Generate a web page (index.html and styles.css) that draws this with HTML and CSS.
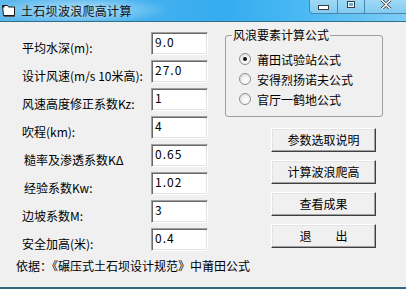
FILE: index.html
```html
<!DOCTYPE html>
<html lang="zh">
<head>
<meta charset="utf-8">
<title>土石坝波浪爬高计算</title>
<link rel="stylesheet" href="styles.css">
</head>
<body>
<div class="window">
  <div class="titlebar">
    <svg class="appicon" width="14" height="12" viewBox="0 0 14 12">
      <path d="M0.5 0.5 H5.5 L6.5 2 H12.5 V10.5 H1.5 Z" fill="#ffffff" stroke="#1a1a1a"/>
      <rect x="0.5" y="0.5" width="2" height="2" fill="#1a1a1a"/>
      <path d="M13 11.5 H2" stroke="#555" />
    </svg>
    <span class="title">土石坝波浪爬高计算</span>
    <div class="controls">
      <span class="ctl min"><i></i></span>
      <span class="ctl max"><i></i></span>
      <span class="ctl close">
        <svg width="12" height="9" viewBox="0 0 12 9"><path d="M1.5 0 L6 4 L10.5 0 M1.5 9 L6 5 L10.5 9" stroke="#3b3b3b" stroke-width="3" fill="none"/><path d="M1.5 0 L6 4 L10.5 0 M1.5 9 L6 5 L10.5 9" stroke="#ffffff" stroke-width="1.4" fill="none"/></svg>
      </span>
    </div>
  </div>
  <div class="client">
    <div class="main">
      <div class="fields">
        <div class="row"><span class="lbl">平均水深(m):</span><div class="box">9.0</div></div>
        <div class="row"><span class="lbl">设计风速(m/s 10米高):</span><div class="box">27.0</div></div>
        <div class="row"><span class="lbl">风速高度修正系数Kz:</span><div class="box">1</div></div>
        <div class="row"><span class="lbl">吹程(km):</span><div class="box">4</div></div>
        <div class="row"><span class="lbl ind">糙率及渗透系数KΔ</span><div class="box">0.65</div></div>
        <div class="row"><span class="lbl ind">经验系数Kw:</span><div class="box">1.02</div></div>
        <div class="row"><span class="lbl">边坡系数M:</span><div class="box">3</div></div>
        <div class="row"><span class="lbl">安全加高(米):</span><div class="box">0.4</div></div>
      </div>
      <div class="side">
        <div class="group">
          <span class="legend">风浪要素计算公式</span>
          <div class="radios">
            <div class="radio"><span class="dot on"></span><span>莆田试验站公式</span></div>
            <div class="radio"><span class="dot"></span><span>安得烈扬诺夫公式</span></div>
            <div class="radio"><span class="dot"></span><span>官厅一鹤地公式</span></div>
          </div>
        </div>
        <div class="buttons">
          <div class="btn">参数选取说明</div>
          <div class="btn">计算波浪爬高</div>
          <div class="btn">查看成果</div>
          <div class="btn">退　　出</div>
        </div>
      </div>
    </div>
    <div class="footer">依据：《碾压式土石坝设计规范》中莆田公式</div>
  </div>
</div>
</body>
</html>
```
FILE: styles.css
```css
html, body {
  margin: 0;
  padding: 0;
  background: #f0f0f0;
}
body {
  font: 12px "Noto Sans CJK SC", "Noto Sans", sans-serif;
  color: #000;
}
.window {
  width: 406px;
  height: 289px;
  display: flex;
  flex-direction: column;
  background: #f0f0f0;
  overflow: hidden;
}
.titlebar {
  height: 21px;
  flex: none;
  display: flex;
  align-items: center;
  border-bottom: 1px solid #2f6f88;
  background:
    radial-gradient(ellipse 90px 14px at 80px 10px, rgba(220, 240, 252, 0.75), rgba(220, 240, 252, 0) 100%),
    linear-gradient(90deg, #5cb8ec 0%, #48b2ee 30%, #35acf0 55%, #4ab9f3 75%, #7ccdf5 100%);
}
.appicon {
  margin-left: 2px;
  margin-top: 1px;
  flex: none;
}
.title {
  margin-left: 5px;
  line-height: 14px;
  color: #111;
  letter-spacing: 0.3px;
}
.controls {
  margin-left: auto;
  align-self: flex-start;
  display: flex;
  height: 13px;
  border: 1px solid #4a86aa;
  border-top: none;
  border-right: none;
  border-bottom-left-radius: 4px;
  background: linear-gradient(180deg, #9fd9f6, #82cbf1);
}
.ctl {
  display: flex;
  align-items: flex-start;
  justify-content: center;
}
.min {
  width: 27px;
  border-right: 1px solid #4a86aa;
}
.min i {
  display: block;
  width: 9px;
  height: 3px;
  margin-top: 5px;
  background: #fff;
  border: 1px solid #3b3b3b;
}
.max {
  width: 26px;
  border-right: 1px solid #4a86aa;
}
.max i {
  display: block;
  width: 6px;
  height: 5px;
  margin-top: 1px;
  background: #58b4e6;
  border: 1px solid #3b3b3b;
  box-shadow: inset 0 0 0 1px #fff;
}
.close {
  width: 41px;
}
.close svg {
  display: block;
}
.client {
  flex: 1;
  display: flex;
  flex-direction: column;
  border-bottom: 2px solid #2c6b7c;
}
.main {
  display: flex;
  padding-left: 22px;
  gap: 17px;
}
.fields {
  width: 186px;
  padding-top: 10px;
  display: flex;
  flex-direction: column;
  gap: 5px;
}
.row {
  display: flex;
  justify-content: space-between;
  height: 23px;
}
.lbl {
  line-height: 15px;
  margin-top: 8px;
  white-space: nowrap;
}
.lbl.ind {
  margin-left: 2px;
}
.box {
  width: 57px;
  height: 23px;
  box-sizing: border-box;
  background: #fff;
  border-style: solid;
  border-width: 1px;
  border-color: #a0a0a0 #ffffff #ffffff #a0a0a0;
  box-shadow: inset 1px 1px 0 #696969, inset -1px -1px 0 #e3e3e3;
  padding: 2px 0 0 3px;
  line-height: 14px;
  letter-spacing: 1px;
}
.side {
  width: 158px;
  padding-top: 13px;
}
.group {
  border: 1px solid #a0a0a0;
  border-radius: 3px;
  display: flex;
  flex-direction: column;
  align-items: flex-start;
  padding-bottom: 7px;
}
.legend {
  margin: -8px 0 0 6px;
  padding: 0 1px;
  background: #f0f0f0;
  line-height: 14px;
}
.radios {
  margin-top: 7px;
  display: flex;
  flex-direction: column;
}
.radio {
  height: 20px;
  display: flex;
  align-items: center;
  padding-left: 13px;
  gap: 6px;
  white-space: nowrap;
}
.dot {
  width: 12px;
  height: 12px;
  box-sizing: border-box;
  border-radius: 50%;
  border: 1px solid #8e8f8f;
  background: radial-gradient(circle at 60% 65%, #ffffff 0%, #f2f2f2 45%, #d4d4d4 100%);
  display: flex;
  align-items: center;
  justify-content: center;
}
.dot.on::after {
  content: "";
  width: 4px;
  height: 4px;
  border-radius: 50%;
  background: #111;
}
.buttons {
  margin: 11px 0 0 46px;
  display: flex;
  flex-direction: column;
  gap: 8px;
}
.btn {
  width: 105px;
  height: 24px;
  box-sizing: border-box;
  display: flex;
  align-items: center;
  justify-content: center;
  background: #f0f0f0;
  border-style: solid;
  border-width: 1px;
  border-color: #ffffff #404040 #404040 #ffffff;
  box-shadow: inset -1px -1px 0 #a0a0a0, inset 1px 1px 0 #e3e3e3;
  line-height: 14px;
}
.footer {
  margin-top: 8px;
  padding-left: 16px;
  line-height: 14px;
  white-space: nowrap;
}
```
